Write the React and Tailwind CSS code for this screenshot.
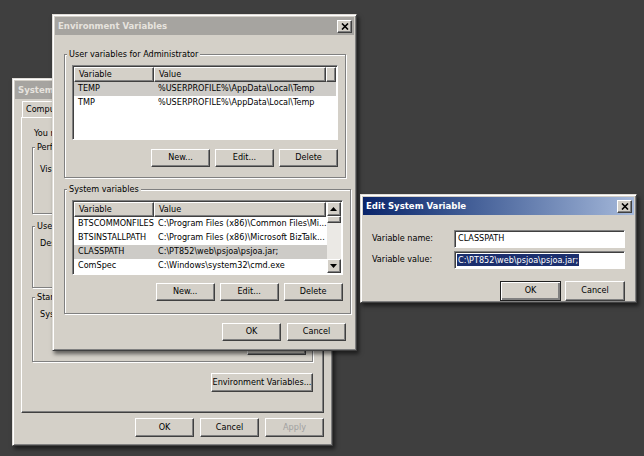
import React from 'react';

// Classic Windows look: raised / sunken / etched edges
const font = "font-['DejaVu_Sans_Condensed','DejaVu_Sans',sans-serif]";
const raised = 'border border-t-white border-l-white border-r-[#404040] border-b-[#404040] shadow-[inset_-1px_-1px_#808080]';
const sunken = 'border border-t-[#808080] border-l-[#808080] border-r-white border-b-white shadow-[inset_1px_1px_#404040]';
const etched = 'border border-[#808080] shadow-[inset_1px_1px_#fff,1px_1px_#fff]';

const userVars = [
  { name: 'TEMP', value: '%USERPROFILE%\\AppData\\Local\\Temp', selected: true },
  { name: 'TMP', value: '%USERPROFILE%\\AppData\\Local\\Temp' },
];

const systemVars = [
  { name: 'BTSCOMMONFILES', value: 'C:\\Program Files (x86)\\Common Files\\Mi...' },
  { name: 'BTSINSTALLPATH', value: 'C:\\Program Files (x86)\\Microsoft BizTalk...' },
  { name: 'CLASSPATH', value: 'C:\\PT852\\web\\psjoa\\psjoa.jar;', selected: true },
  { name: 'ComSpec', value: 'C:\\Windows\\system32\\cmd.exe' },
];

const Button = ({ children, w = 'w-[59px]', h = 'h-[18px]', disabled, isDefault }) => (
  <div
    className={`${w} ${h} shrink-0 flex items-center justify-center bg-[#d4d0c8] whitespace-nowrap ${
      isDefault
        ? 'border border-[#202020] shadow-[inset_1px_1px_#fff,inset_-2px_-2px_#808080]'
        : raised
    } ${disabled ? 'text-[#a0a0a0]' : 'text-black'}`}
  >
    {children}
  </div>
);

const CloseButton = () => (
  <div className={`w-[15px] h-[13px] bg-[#d4d0c8] ${raised} flex items-center justify-center`}>
    <svg width="8" height="7" viewBox="0 0 8 7">
      <path d="M1 0.5 L7 6.5 M7 0.5 L1 6.5" stroke="#000" strokeWidth="1.6" />
    </svg>
  </div>
);

const Arrow = ({ up }) => (
  <div className={`h-[14px] bg-[#d4d0c8] ${raised} flex items-center justify-center`}>
    <svg width="7" height="4" viewBox="0 0 7 4">
      <path d={up ? 'M0 4 L3.5 0 L7 4 Z' : 'M0 0 L3.5 4 L7 0 Z'} fill="#000" />
    </svg>
  </div>
);

const Window = ({ title, active, className, children }) => (
  <div
    className={`absolute flex flex-col bg-[#d4d0c8] p-[2px] border border-t-[#e0ddd8] border-l-[#e0ddd8] border-r-[#404040] border-b-[#404040] shadow-[inset_1px_1px_#fff,inset_-1px_-1px_#808080,2px_3px_4px_rgba(0,0,0,0.55)] ${className}`}
  >
    <div
      className={`h-[18px] shrink-0 flex items-center justify-between pl-[3px] pr-[2px] font-bold text-[9.5px] ${
        active
          ? 'bg-gradient-to-r from-[#0a246a] to-[#a6b9da] text-white'
          : 'bg-[#a6a4a0] text-[#e6e3de]'
      }`}
    >
      <span className="whitespace-nowrap">{title}</span>
      <CloseButton />
    </div>
    {children}
  </div>
);

const VarList = ({ rows, scroll }) => (
  <div className={`mt-[5px] h-[75px] bg-white ${sunken} p-[1px] flex`}>
    <div className="flex-1 flex flex-col">
      <div className="flex h-[15px] shrink-0">
        <div className={`w-[80px] ${raised} bg-[#d4d0c8] pl-[4px] leading-[12px]`}>Variable</div>
        <div className={`w-[172px] ${raised} bg-[#d4d0c8] pl-[4px] leading-[12px]`}>Value</div>
        {!scroll && <div className={`flex-1 ${raised} bg-[#d4d0c8]`} />}
      </div>
      {rows.map((r) => (
        <div key={r.name} className={`flex h-[14px] items-center ${r.selected ? 'bg-[#cdcbc7]' : ''}`}>
          <span className="w-[80px] pl-[4px] whitespace-nowrap overflow-hidden">{r.name}</span>
          <span className="pl-[4px] whitespace-nowrap">{r.value}</span>
        </div>
      ))}
    </div>
    {scroll && (
      <div className="w-[14px] flex flex-col bg-[#ebe9e5]">
        <Arrow up />
        <div className={`h-[7px] bg-[#d4d0c8] ${raised}`} />
        <div className="flex-1" />
        <Arrow />
      </div>
    )}
  </div>
);

// etched group box; padding goes on the inner div so the legend stays near the corner
const Group = ({ label, className, inner, children }) => (
  <fieldset className={`${etched} ${className}`}>
    <legend className="ml-[2px] px-[2px] bg-[#d4d0c8] leading-[11px] whitespace-nowrap">{label}</legend>
    <div className={inner}>{children}</div>
  </fieldset>
);

const SystemProperties = () => (
  <Window title="System Properties" className="left-[12px] top-[78px] w-[321px] h-[368px]">
    <div className="flex flex-col px-[6px] flex-1">
      <div className="flex items-end h-[18px] pl-[1px]">
        {['Computer Name', 'Hardware', 'Advanced', 'System Protection', 'Remote'].map((t) => (
          <div
            key={t}
            className="h-[16px] px-[3px] border border-b-0 border-t-white border-l-white border-r-[#404040] shadow-[inset_-1px_0_#808080] flex items-center whitespace-nowrap"
          >
            {t}
          </div>
        ))}
      </div>
      <div className={`h-[296px] ${raised} pt-[10px] px-[10px] flex flex-col`}>
        <div className="pl-[2px] leading-[11px] whitespace-nowrap overflow-hidden">You must be logged on as an Administrator to make most of these changes.</div>
        <Group label="Performance" className="mt-[3px] h-[72px] overflow-hidden" inner="pl-[7px] pr-[6px]">
          <div className="mt-[10px] whitespace-nowrap">Visual effects, processor scheduling, memory usage</div>
        </Group>
        <Group label="User Profiles" className="mt-[7px] h-[67px] overflow-hidden" inner="pl-[7px] pr-[6px]">
          <div className="mt-[5px] whitespace-nowrap">Desktop settings related to your logon</div>
        </Group>
        <Group label="Startup and Recovery" className="mt-[4px] h-[70px] overflow-hidden" inner="pl-[7px] pr-[6px] flex flex-col">
          <div className="mt-[5px] whitespace-nowrap">System startup, system failure</div>
          <div className="mt-[15px] flex justify-end">
            <Button>Settings...</Button>
          </div>
        </Group>
        <div className="mt-[11px] flex justify-end">
          <Button w="w-[102px]" h="h-[19px]">Environment Variables...</Button>
        </div>
      </div>
      <div className="mt-[5px] flex justify-end gap-[6px]">
        <Button h="h-[19px]">OK</Button>
        <Button h="h-[19px]">Cancel</Button>
        <Button h="h-[19px]" disabled>Apply</Button>
      </div>
    </div>
  </Window>
);

const EnvironmentVariables = () => (
  <Window title="Environment Variables" className="left-[52px] top-[14px] w-[305px] h-[337px]">
    <div className="flex flex-col pl-[9px] pr-[8px] pt-[14px]">
      <Group label="User variables for Administrator" className="h-[129px]" inner="px-[7px]">
        <VarList rows={userVars} />
        <div className="mt-[9px] flex justify-end gap-[5px]">
          <Button>New...</Button>
          <Button>Edit...</Button>
          <Button>Delete</Button>
        </div>
      </Group>
      <Group label="System variables" className="mt-[6px] h-[130px]" inner="px-[7px]">
        <VarList rows={systemVars} scroll />
        <div className="mt-[8px] flex justify-end gap-[5px]">
          <Button>New...</Button>
          <Button>Edit...</Button>
          <Button>Delete</Button>
        </div>
      </Group>
      <div className="mt-[9px] flex justify-end gap-[6px]">
        <Button h="h-[18px]">OK</Button>
        <Button h="h-[18px]">Cancel</Button>
      </div>
    </div>
  </Window>
);

const EditVariable = () => (
  <Window title="Edit System Variable" active className="left-[360px] top-[194px] w-[277px] h-[109px]">
    <div className="flex flex-col pl-[9px] pr-[9px] pt-[15px]">
      <div className="flex items-center h-[18px]">
        <span className="w-[82px]">Variable name:</span>
        <div className={`flex-1 h-[18px] bg-white ${sunken} flex items-center pl-[3px]`}>CLASSPATH</div>
      </div>
      <div className="flex items-center h-[18px] mt-[3px]">
        <span className="w-[82px]">Variable value:</span>
        <div className={`flex-1 h-[18px] bg-white ${sunken} flex items-center pl-[2px]`}>
          <span className="bg-[#1b2f6e] text-white px-[1px] leading-[12px]">C:\PT852\web\psjoa\psjoa.jar;</span>
        </div>
      </div>
      <div className="mt-[12px] flex justify-end gap-[4px]">
        <Button w="w-[61px]" h="h-[20px]" isDefault>OK</Button>
        <Button w="w-[60px]" h="h-[20px]">Cancel</Button>
      </div>
    </div>
  </Window>
);

export default function App() {
  return (
    <div className={`relative w-[644px] h-[456px] overflow-hidden bg-[#3f3f3f] text-[9px] text-black ${font}`}>
      <SystemProperties />
      <EnvironmentVariables />
      <EditVariable />
    </div>
  );
}
